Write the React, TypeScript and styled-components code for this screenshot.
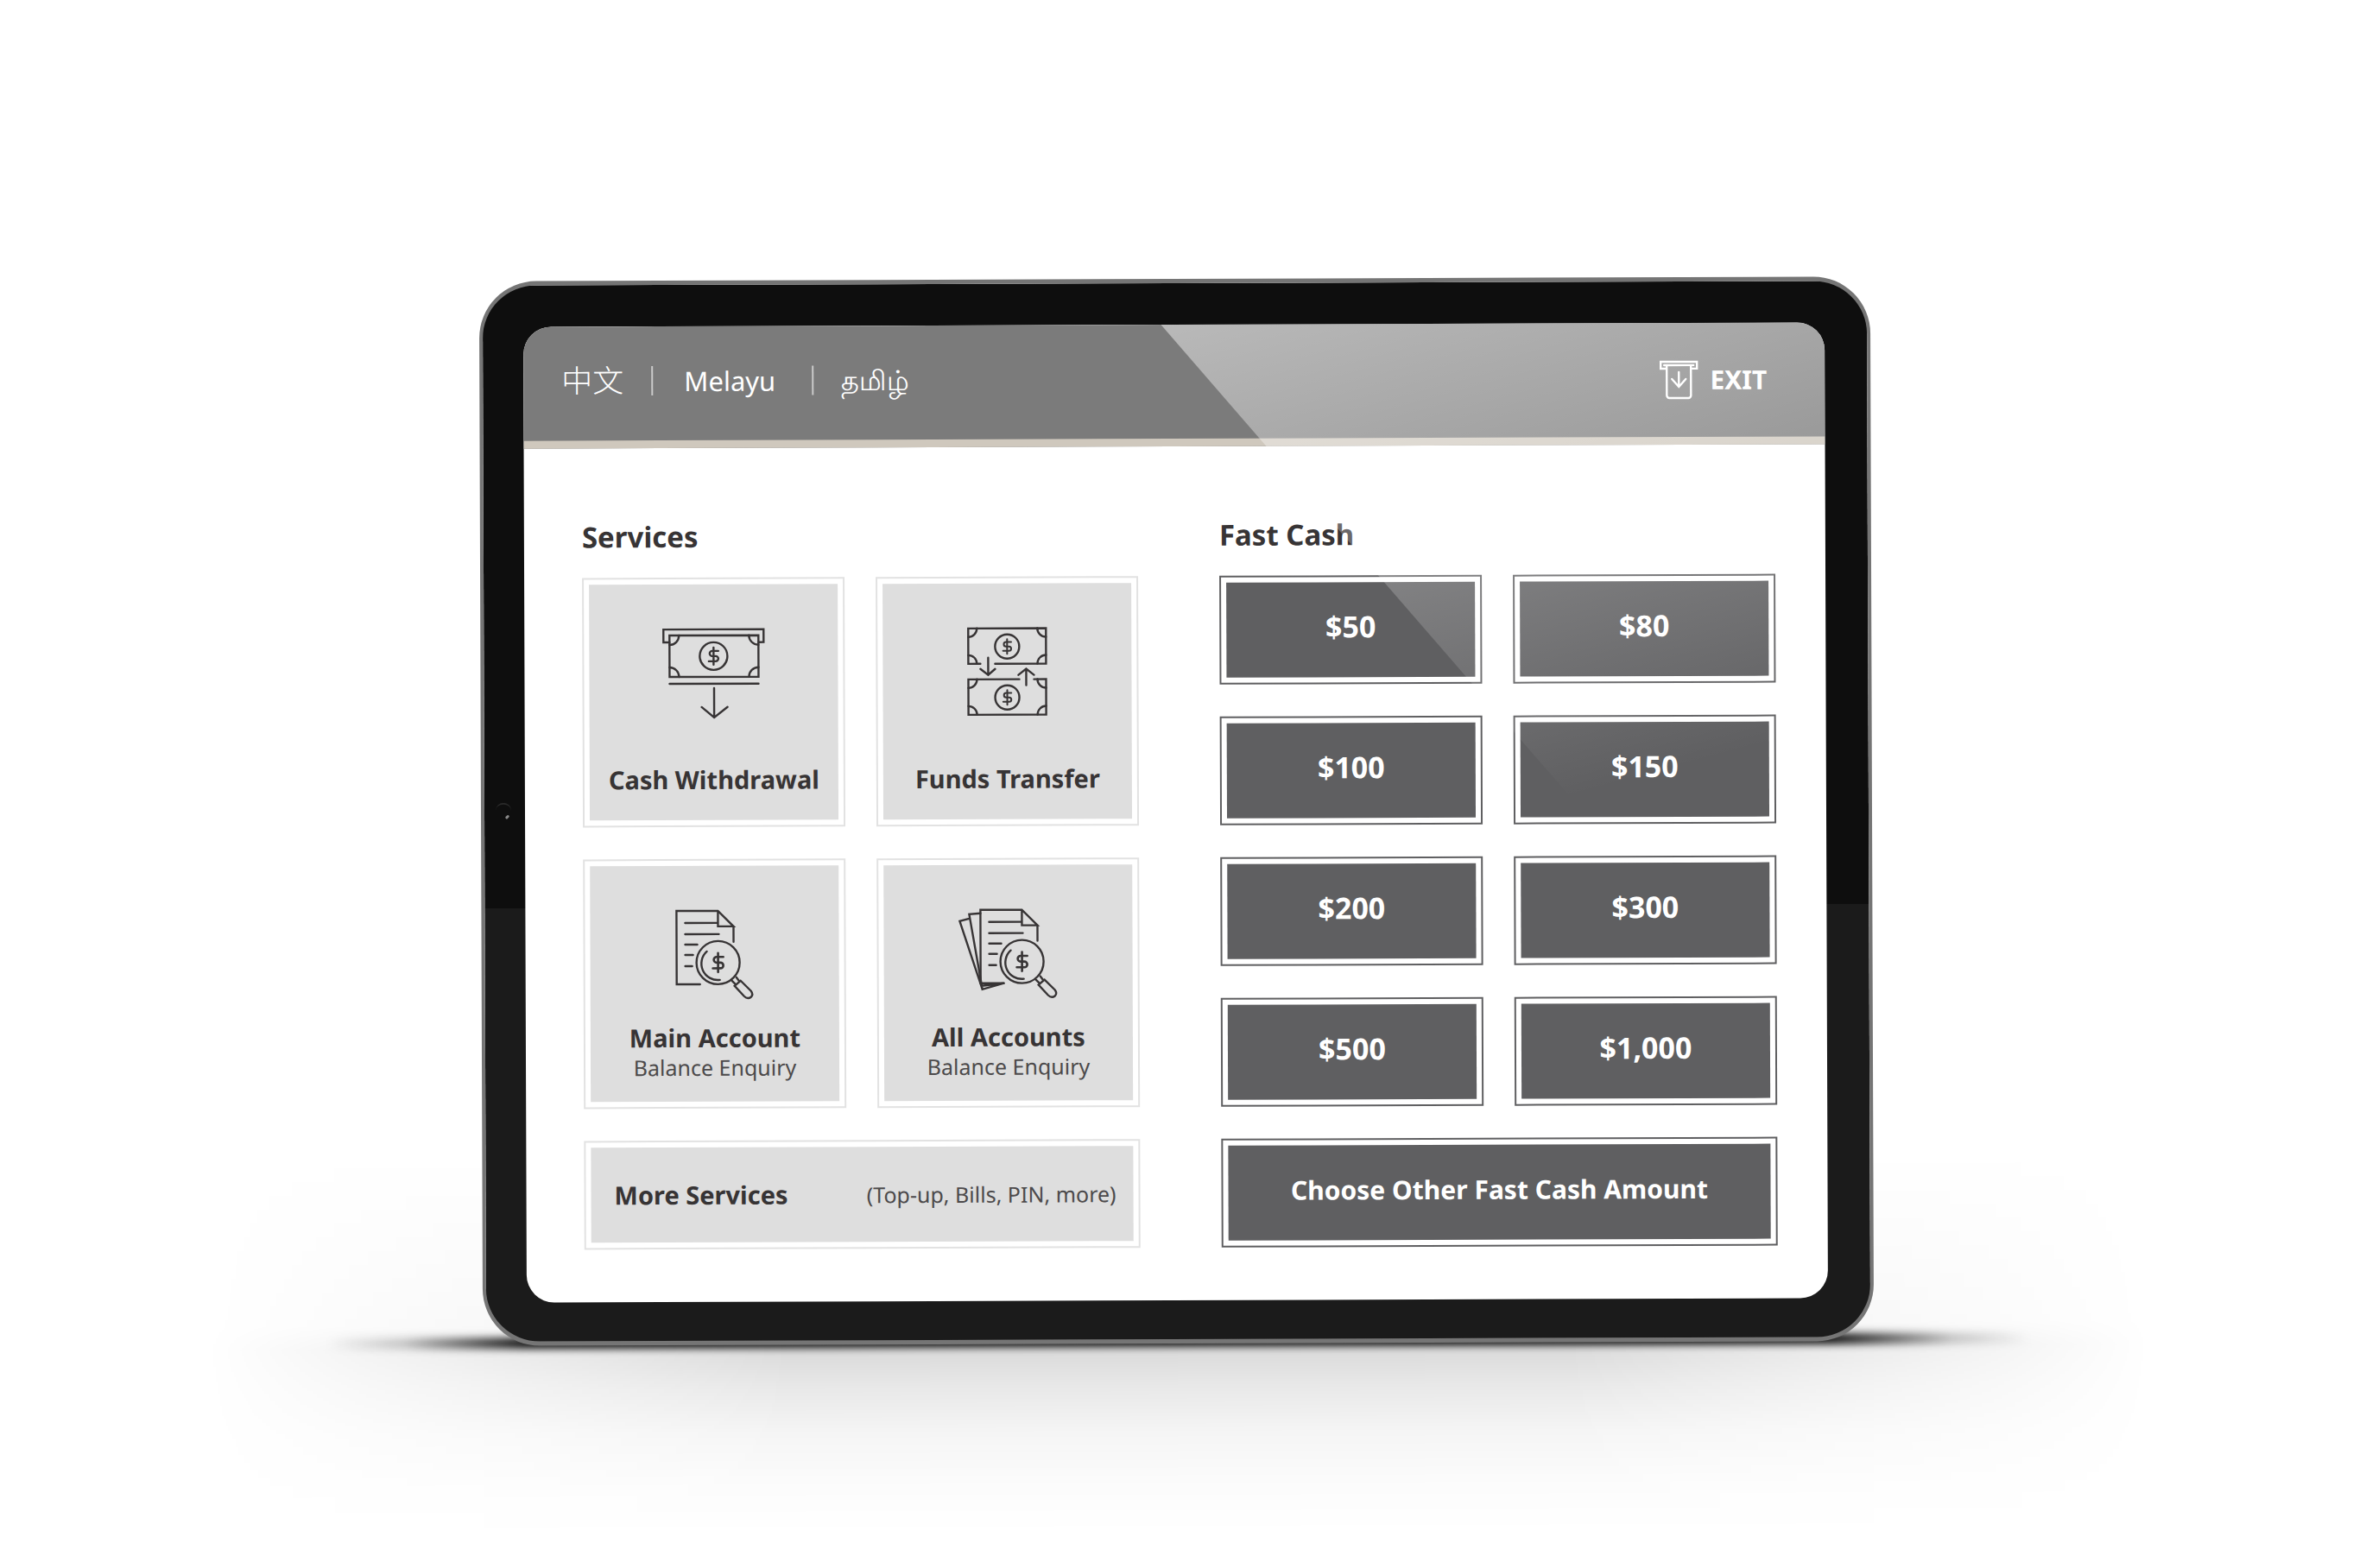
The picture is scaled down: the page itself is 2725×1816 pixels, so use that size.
import React from "react";
import styled, { createGlobalStyle } from "styled-components";

const ink = "#373435";
const paper = "#dedede";
const slate = "#5f5f61";
const sans = '"Noto Sans", "Open Sans", "Noto Sans CJK SC", sans-serif';

const GlobalStyle = createGlobalStyle`
  *, *::before, *::after { box-sizing: border-box; }
  body { margin: 0; background: #ffffff; font-family: ${sans}; color: ${ink}; }
  button { font: inherit; color: inherit; cursor: pointer; }
`;

const Stage = styled.main`
  min-height: 100vh;
  padding: 323px 24px 261px;
  overflow: hidden;
`;

const Tablet = styled.div`
  position: relative;
  width: 100%;
  max-width: 1611px;
  margin: 0 auto;
  transform: rotate(-0.2deg);
`;

const FloorShade = styled.div`
  position: absolute;
  left: -320px;
  right: -320px;
  bottom: -220px;
  height: 450px;
  background: linear-gradient(
    transparent,
    rgba(0, 0, 0, 0.05) 46%,
    rgba(0, 0, 0, 0.15) 52%,
    rgba(0, 0, 0, 0.09) 62%,
    rgba(0, 0, 0, 0.04) 74%,
    rgba(0, 0, 0, 0.01) 88%,
    transparent
  );
  mask-image: linear-gradient(90deg, transparent, rgba(0, 0, 0, 0.3) 8%, #000000 30%, #000000 70%, rgba(0, 0, 0, 0.3) 92%, transparent);
`;

const ContactShade = styled.div`
  position: absolute;
  left: -180px;
  right: -180px;
  bottom: -3px;
  height: 12px;
  background: linear-gradient(90deg, transparent, rgba(0, 0, 0, 0.2) 90px, #000000 230px, #000000 calc(100% - 230px), rgba(0, 0, 0, 0.2) calc(100% - 90px), transparent);
  filter: blur(5px);
`;

const Bezel = styled.div`
  position: relative;
  padding: 48px 49px 45px 47px;
  border: solid #757575;
  border-width: 5px 4px 5px 4px;
  border-radius: 66px;
  background: linear-gradient(#0e0e0e 59%, #1b1b1b 59%);
`;

const Camera = styled.span`
  position: absolute;
  left: 13px;
  top: calc(50% - 13px);
  width: 18px;
  height: 18px;
  border-radius: 50%;
  border-top: 2px solid #2a2a2a;

  &::after {
    content: "";
    position: absolute;
    right: 2px;
    bottom: 0;
    width: 5px;
    height: 3px;
    border-radius: 2px;
    background: #8a8a8a;
    transform: rotate(-45deg);
  }
`;

const Screen = styled.div`
  position: relative;
  overflow: hidden;
  border-radius: 32px;
  background: #ffffff;
`;

const Glare = styled.div`
  position: absolute;
  inset: 0;
  pointer-events: none;
  clip-path: polygon(49% 0, 100% 0, 100% 79%);
  background: linear-gradient(165deg, rgba(255, 255, 255, 0.47) 191px, rgba(255, 255, 255, 0) 844px);
`;

const TopBar = styled.header`
  display: flex;
  align-items: center;
  justify-content: space-between;
  height: 141px;
  padding: 0 67px 0 44px;
  border-bottom: 9px solid #cfc8bd;
  background: #7b7b7b;
  color: #ffffff;
`;

const Languages = styled.nav`
  display: flex;
  align-items: center;
  padding-bottom: 6px;
`;

const Language = styled.a<{ $size: number; $weight?: number }>`
  font-size: ${(p) => p.$size}px;
  font-weight: ${(p) => p.$weight ?? 400};
  line-height: 40px;
  color: inherit;
  text-decoration: none;
`;

const Divider = styled.span`
  width: 2px;
  height: 34px;
  margin: 0 36px 0 32px;
  background: rgba(255, 255, 255, 0.6);

  &:last-of-type {
    margin: 0 32px 0 42px;
  }
`;

const ExitButton = styled.button`
  display: flex;
  align-items: center;
  gap: 14px;
  padding: 0;
  border: 0;
  background: none;
  font-size: 30px;
  font-weight: 700;
  line-height: 40px;
`;

const Columns = styled.div`
  display: grid;
  grid-template-columns: 1fr 1fr;
  gap: 94px;
  padding: 83px 58px 61px 67px;
`;

const Heading = styled.h2`
  margin: 0 0 27px;
  font-size: 33px;
  font-weight: 700;
  line-height: 40px;
`;

const Tiles = styled.div`
  display: grid;
  grid-template-columns: 1fr 1fr;
  grid-auto-rows: 126px;
  gap: 37px 36px;
`;

const Tile = styled.button<{ $tall?: boolean; $wide?: boolean; $dark?: boolean }>`
  grid-row: span ${(p) => (p.$tall ? 2 : 1)};
  grid-column: span ${(p) => (p.$wide ? 2 : 1)};
  display: flex;
  padding: 6px;
  border: 2px solid ${(p) => (p.$dark ? slate : "#e2e2e2")};
  background: #ffffff;
`;

const ServiceFace = styled.span`
  flex: 1;
  align-self: stretch;
  display: flex;
  flex-direction: column;
  align-items: center;
  padding-top: 51px;
  background: ${paper};
`;

const Label = styled.span<{ $gap?: number }>`
  margin-top: ${(p) => p.$gap ?? 0}px;
  font-size: 29px;
  font-weight: 700;
  line-height: 36px;
  white-space: nowrap;
`;

const Note = styled.span`
  font-size: 25px;
  line-height: 32px;
  color: #4c4a4b;
  white-space: nowrap;
`;

const MoreFace = styled.span`
  flex: 1;
  align-self: stretch;
  display: flex;
  align-items: center;
  justify-content: space-between;
  padding: 0 20px 0 27px;
  background: ${paper};
`;

const CashFace = styled.span<{ $size: number }>`
  flex: 1;
  align-self: stretch;
  display: flex;
  align-items: center;
  justify-content: center;
  padding-bottom: 8px;
  background: ${slate};
  color: #ffffff;
  font-size: ${(p) => p.$size}px;
  font-weight: 700;
`;

const Drawing = styled.svg`
  display: block;
  flex: none;
  fill: none;
  stroke: currentColor;
  stroke-width: 2.4;
  stroke-linecap: round;
  stroke-linejoin: miter;
  overflow: visible;
`;

const Dollar = ({ x, y, s = 1 }: { x: number; y: number; s?: number }) => (
  <g transform={`translate(${x} ${y}) scale(${s})`}>
    <path d="M0-10V10M5.500-6H-1.500a3 3 0 0 0 0 6H2.500a3 3 0 0 1 0 6H-5.500" />
  </g>
);

const Corners = ({ x, y, w, h, r }: { x: number; y: number; w: number; h: number; r: number }) => (
  <path
    d={`M${x} ${y + r}a${r} ${r} 0 0 0 ${r} ${-r}M${x + w - r} ${y}a${r} ${r} 0 0 0 ${r} ${r}M${x + w} ${y + h - r}a${r} ${r} 0 0 0 ${-r} ${r}M${x + r} ${y + h}a${r} ${r} 0 0 0 ${-r} ${-r}`}
  />
);

const WithdrawIcon = () => (
  <Drawing width="118" height="104" viewBox="0 0 118 104" aria-hidden="true">
    <path d="M8 16H1V1H117V16H111" />
    <path d="M8 8H111V56H8ZM8 64H111" />
    <Corners x={8} y={8} w={103} h={48} r={11} />
    <circle cx="59" cy="32" r="16" />
    <Dollar x={59} y={32} />
    <path d="M59.500 69V102M45 91L59.500 103L75 91" />
  </Drawing>
);

const TransferIcon = () => (
  <Drawing width="92" height="104" viewBox="0 0 92 104" aria-hidden="true">
    <path d="M15 42H1V1H91V42H32" />
    <Corners x={1} y={1} w={90} h={41} r={10} />
    <circle cx="46" cy="22" r="14" />
    <Dollar x={46} y={22} s={0.85} />
    <path d="M60 60H1V101H91V60H77" />
    <Corners x={1} y={60} w={90} h={41} r={10} />
    <circle cx="46" cy="81" r="14" />
    <Dollar x={46} y={81} s={0.85} />
    <path d="M24 35V54M15 48L24 55L32 48M68 67V49M59 55L68 48L77 55" />
  </Drawing>
);

const Statement = () => (
  <>
    <path d="M49 1V19H67L49 1H1V86H28M67 19V37" />
    <path d="M11 15H48M11 28H50M11 40H25M11 52H20M11 65H19" />
    <circle cx="49" cy="61" r="25" />
    <path d="M36 48A19 19 0 0 0 51 81" />
    <Dollar x={49} y={61} s={1.1} />
    <path d="M65 82L69 86M70 78L73 82M68 88L75 82L87 94Q90 98 87 101Q83 104 79 100Z" />
  </>
);

const StatementIcon = () => (
  <Drawing width="90" height="104" viewBox="0 0 90 104" aria-hidden="true">
    <Statement />
  </Drawing>
);

const StatementsIcon = () => (
  <Drawing width="114" height="104" viewBox="-24 0 114 104" aria-hidden="true">
    <Statement />
    <path d="M1 5L-12 6L3 93L28 86L2 89M-12 11L-23 14L3 93" />
  </Drawing>
);

const ExitIcon = () => (
  <Drawing width="44" height="44" viewBox="0 0 44 44" aria-hidden="true">
    <path d="M7 9H1V1H43V9H37M5 5H39" />
    <path d="M8 6V40a3 3 0 0 0 3 3H33a3 3 0 0 0 3-3V6M22 13V29M14 21L22 30L30 21" />
  </Drawing>
);

const services = [
  { label: "Cash Withdrawal", Icon: WithdrawIcon },
  { label: "Funds Transfer", Icon: TransferIcon },
  { label: "Main Account", note: "Balance Enquiry", Icon: StatementIcon },
  { label: "All Accounts", note: "Balance Enquiry", Icon: StatementsIcon },
];

const amounts = ["$50", "$80", "$100", "$150", "$200", "$300", "$500", "$1,000"];

export default function App() {
  return (
    <>
      <GlobalStyle />
      <Stage>
        <Tablet>
          <FloorShade />
          <ContactShade />
          <Bezel>
            <Camera />
            <Screen>
              <TopBar>
                <Languages aria-label="Language">
                  <Language href="#zh" lang="zh" $size={36} $weight={300}>中文</Language>
                  <Divider />
                  <Language href="#ms" lang="ms" $size={31}>Melayu</Language>
                  <Divider />
                  <Language href="#ta" lang="ta" $size={32} $weight={500}>தமிழ்</Language>
                </Languages>
                <ExitButton type="button">
                  <ExitIcon />
                  EXIT
                </ExitButton>
              </TopBar>
              <Columns>
                <section>
                  <Heading>Services</Heading>
                  <Tiles>
                    {services.map(({ label, note, Icon }) => (
                      <Tile key={label} type="button" $tall>
                        <ServiceFace>
                          <Icon />
                          <Label $gap={note ? 26 : 53}>{label}</Label>
                          {note && <Note>{note}</Note>}
                        </ServiceFace>
                      </Tile>
                    ))}
                    <Tile type="button" $wide>
                      <MoreFace>
                        <Label>More Services</Label>
                        <Note>(Top-up, Bills, PIN, more)</Note>
                      </MoreFace>
                    </Tile>
                  </Tiles>
                </section>
                <section>
                  <Heading>Fast Cash</Heading>
                  <Tiles>
                    {amounts.map((amount) => (
                      <Tile key={amount} type="button" $dark>
                        <CashFace $size={34}>{amount}</CashFace>
                      </Tile>
                    ))}
                    <Tile type="button" $wide $dark>
                      <CashFace $size={30}>Choose Other Fast Cash Amount</CashFace>
                    </Tile>
                  </Tiles>
                </section>
              </Columns>
              <Glare />
            </Screen>
          </Bezel>
        </Tablet>
      </Stage>
    </>
  );
}
